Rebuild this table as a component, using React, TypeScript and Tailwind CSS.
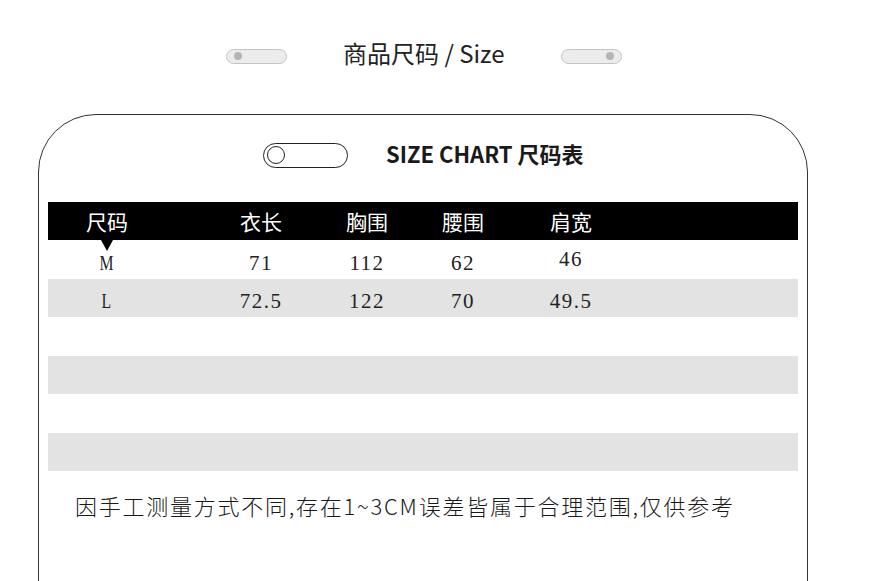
const cjk = { fontFamily: '"Noto Sans CJK SC", "Noto Sans", sans-serif' };
const serif = { fontFamily: '"Liberation Serif", "Noto Sans CJK SC", serif' };

const cols = ["尺码", "衣长", "胸围", "腰围", "肩宽"];
const rows = [
  ["M", "71", "112", "62", "46"],
  ["L", "72.5", "122", "70", "49.5"],
];
// left offsets for each 80px-wide cell
const gaps = ["ml-[19px]", "ml-[74px]", "ml-[26px]", "ml-[16px]", "ml-[28px]"];

function Pill({ dotRight }: { dotRight?: boolean }) {
  return (
    <div
      className={`flex h-[15px] w-[61px] items-center rounded-full border border-[#c4c4c4] bg-[#ececec] px-[7px] ${
        dotRight ? "justify-end" : "justify-start"
      }`}
    >
      <div className="h-[8px] w-[8px] rounded-full bg-[#b5b5b5]" />
    </div>
  );
}

export default function App() {
  return (
    <div className="h-[581px] w-[871px] overflow-hidden bg-white" style={cjk}>
      {/* heading */}
      <div className="mt-[38px] flex h-[34px] items-center">
        <div className="ml-[226px] mt-[2px]">
          <Pill />
        </div>
        <div className="ml-[56px] pb-[4px] text-[24px] leading-[34px] text-[#222]">
          商品尺码 / Size
        </div>
        <div className="ml-[56px] mt-[2px]">
          <Pill dotRight />
        </div>
      </div>

      {/* card */}
      <div className="ml-[38px] mt-[42px] h-[600px] w-[770px] rounded-t-[58px] border border-[#333] px-[9px]">
        <div className="mt-[27px] flex h-[26px] items-center">
          <div className="ml-[215px] flex h-[25px] w-[85px] items-center rounded-full border border-[#222] pl-[3px]">
            <div className="h-[18px] w-[18px] rounded-full border border-[#222]" />
          </div>
          <div className="ml-[38px] pb-[4px] text-[22px] font-bold leading-[26px] text-[#1a1a1a]">
            SIZE CHART 尺码表
          </div>
        </div>

        <div className="mt-[34px] w-[750px]">
          <div className="relative flex h-[38px] items-center bg-black text-[21px] text-white">
            {cols.map((c, i) => (
              <div key={c} className={`${gaps[i]} w-[80px] text-center leading-none`}>
                {c}
              </div>
            ))}
            <div className="absolute left-[53px] top-[38px] h-0 w-0 border-x-[6px] border-t-[11px] border-x-transparent border-t-black" />
          </div>
          {[0, 1, 2, 3, 4, 5].map((r) => (
            <div
              key={r}
              className={`flex h-[38.5px] items-center pt-[8px] text-[21px] tracking-[1.5px] text-[#222] ${
                r % 2 === 1 ? "bg-[#e3e3e3]" : "bg-white"
              }`}
              style={serif}
            >
              {rows[r] &&
                rows[r].map((v, i) => (
                  <div
                    key={i}
                    className={`${gaps[i]} w-[80px] text-center leading-none ${
                      r === 0 && i === 4 ? "-mt-[8px]" : ""
                    } ${i === 0 ? "scale-x-75" : ""}`}
                  >
                    {v}
                  </div>
                ))}
            </div>
          ))}
        </div>

        <div className="ml-[27px] mt-[18px] text-[22px] font-light tracking-[1.75px] text-[#1a1a1a]">
          因手工测量方式不同,存在1~3CM误差皆属于合理范围,仅供参考
        </div>
      </div>
    </div>
  );
}
